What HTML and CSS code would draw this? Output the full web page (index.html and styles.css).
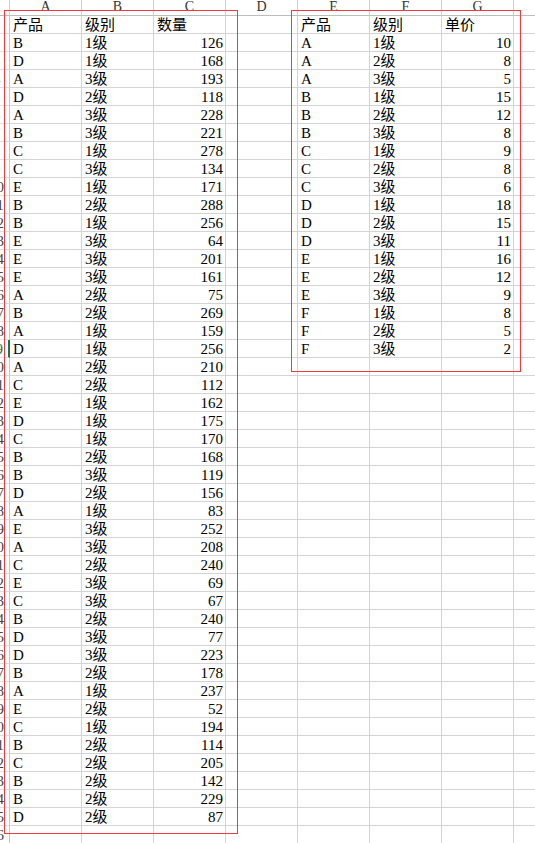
FILE: index.html
```html
<!DOCTYPE html>
<html lang="zh">
<head>
<meta charset="utf-8">
<title>Sheet</title>
<link rel="stylesheet" href="styles.css">
</head>
<body>
<div class="sheet">
  <div class="row hd"><span class="rh"></span><span class="c">A</span><span class="c">B</span><span class="c">C</span><span class="c">D</span><span class="c">E</span><span class="c">F</span><span class="c">G</span><span class="c"></span></div>
  <div class="row"><span class="rh"><i>1</i></span><span class="c">产品</span><span class="c">级别</span><span class="c">数量</span><span class="c"></span><span class="c">产品</span><span class="c">级别</span><span class="c">单价</span><span class="c"></span></div>
  <div class="row"><span class="rh"><i>2</i></span><span class="c">B</span><span class="c">1级</span><span class="c num">126</span><span class="c"></span><span class="c">A</span><span class="c">1级</span><span class="c num">10</span><span class="c"></span></div>
  <div class="row"><span class="rh"><i>3</i></span><span class="c">D</span><span class="c">1级</span><span class="c num">168</span><span class="c"></span><span class="c">A</span><span class="c">2级</span><span class="c num">8</span><span class="c"></span></div>
  <div class="row"><span class="rh"><i>4</i></span><span class="c">A</span><span class="c">3级</span><span class="c num">193</span><span class="c"></span><span class="c">A</span><span class="c">3级</span><span class="c num">5</span><span class="c"></span></div>
  <div class="row"><span class="rh"><i>5</i></span><span class="c">D</span><span class="c">2级</span><span class="c num">118</span><span class="c"></span><span class="c">B</span><span class="c">1级</span><span class="c num">15</span><span class="c"></span></div>
  <div class="row"><span class="rh"><i>6</i></span><span class="c">A</span><span class="c">3级</span><span class="c num">228</span><span class="c"></span><span class="c">B</span><span class="c">2级</span><span class="c num">12</span><span class="c"></span></div>
  <div class="row"><span class="rh"><i>7</i></span><span class="c">B</span><span class="c">3级</span><span class="c num">221</span><span class="c"></span><span class="c">B</span><span class="c">3级</span><span class="c num">8</span><span class="c"></span></div>
  <div class="row"><span class="rh"><i>8</i></span><span class="c">C</span><span class="c">1级</span><span class="c num">278</span><span class="c"></span><span class="c">C</span><span class="c">1级</span><span class="c num">9</span><span class="c"></span></div>
  <div class="row"><span class="rh"><i>9</i></span><span class="c">C</span><span class="c">3级</span><span class="c num">134</span><span class="c"></span><span class="c">C</span><span class="c">2级</span><span class="c num">8</span><span class="c"></span></div>
  <div class="row"><span class="rh"><i>10</i></span><span class="c">E</span><span class="c">1级</span><span class="c num">171</span><span class="c"></span><span class="c">C</span><span class="c">3级</span><span class="c num">6</span><span class="c"></span></div>
  <div class="row"><span class="rh"><i>11</i></span><span class="c">B</span><span class="c">2级</span><span class="c num">288</span><span class="c"></span><span class="c">D</span><span class="c">1级</span><span class="c num">18</span><span class="c"></span></div>
  <div class="row"><span class="rh"><i>12</i></span><span class="c">B</span><span class="c">1级</span><span class="c num">256</span><span class="c"></span><span class="c">D</span><span class="c">2级</span><span class="c num">15</span><span class="c"></span></div>
  <div class="row"><span class="rh"><i>13</i></span><span class="c">E</span><span class="c">3级</span><span class="c num">64</span><span class="c"></span><span class="c">D</span><span class="c">3级</span><span class="c num">11</span><span class="c"></span></div>
  <div class="row"><span class="rh"><i>14</i></span><span class="c">E</span><span class="c">3级</span><span class="c num">201</span><span class="c"></span><span class="c">E</span><span class="c">1级</span><span class="c num">16</span><span class="c"></span></div>
  <div class="row"><span class="rh"><i>15</i></span><span class="c">E</span><span class="c">3级</span><span class="c num">161</span><span class="c"></span><span class="c">E</span><span class="c">2级</span><span class="c num">12</span><span class="c"></span></div>
  <div class="row"><span class="rh"><i>16</i></span><span class="c">A</span><span class="c">2级</span><span class="c num">75</span><span class="c"></span><span class="c">E</span><span class="c">3级</span><span class="c num">9</span><span class="c"></span></div>
  <div class="row"><span class="rh"><i>17</i></span><span class="c">B</span><span class="c">2级</span><span class="c num">269</span><span class="c"></span><span class="c">F</span><span class="c">1级</span><span class="c num">8</span><span class="c"></span></div>
  <div class="row"><span class="rh"><i>18</i></span><span class="c">A</span><span class="c">1级</span><span class="c num">159</span><span class="c"></span><span class="c">F</span><span class="c">2级</span><span class="c num">5</span><span class="c"></span></div>
  <div class="row"><span class="rh sel"><i>19</i></span><span class="c">D</span><span class="c">1级</span><span class="c num">256</span><span class="c"></span><span class="c">F</span><span class="c">3级</span><span class="c num">2</span><span class="c"></span></div>
  <div class="row"><span class="rh"><i>20</i></span><span class="c">A</span><span class="c">2级</span><span class="c num">210</span><span class="c"></span><span class="c"></span><span class="c"></span><span class="c"></span><span class="c"></span></div>
  <div class="row"><span class="rh"><i>21</i></span><span class="c">C</span><span class="c">2级</span><span class="c num">112</span><span class="c"></span><span class="c"></span><span class="c"></span><span class="c"></span><span class="c"></span></div>
  <div class="row"><span class="rh"><i>22</i></span><span class="c">E</span><span class="c">1级</span><span class="c num">162</span><span class="c"></span><span class="c"></span><span class="c"></span><span class="c"></span><span class="c"></span></div>
  <div class="row"><span class="rh"><i>23</i></span><span class="c">D</span><span class="c">1级</span><span class="c num">175</span><span class="c"></span><span class="c"></span><span class="c"></span><span class="c"></span><span class="c"></span></div>
  <div class="row"><span class="rh"><i>24</i></span><span class="c">C</span><span class="c">1级</span><span class="c num">170</span><span class="c"></span><span class="c"></span><span class="c"></span><span class="c"></span><span class="c"></span></div>
  <div class="row"><span class="rh"><i>25</i></span><span class="c">B</span><span class="c">2级</span><span class="c num">168</span><span class="c"></span><span class="c"></span><span class="c"></span><span class="c"></span><span class="c"></span></div>
  <div class="row"><span class="rh"><i>26</i></span><span class="c">B</span><span class="c">3级</span><span class="c num">119</span><span class="c"></span><span class="c"></span><span class="c"></span><span class="c"></span><span class="c"></span></div>
  <div class="row"><span class="rh"><i>27</i></span><span class="c">D</span><span class="c">2级</span><span class="c num">156</span><span class="c"></span><span class="c"></span><span class="c"></span><span class="c"></span><span class="c"></span></div>
  <div class="row"><span class="rh"><i>28</i></span><span class="c">A</span><span class="c">1级</span><span class="c num">83</span><span class="c"></span><span class="c"></span><span class="c"></span><span class="c"></span><span class="c"></span></div>
  <div class="row"><span class="rh"><i>29</i></span><span class="c">E</span><span class="c">3级</span><span class="c num">252</span><span class="c"></span><span class="c"></span><span class="c"></span><span class="c"></span><span class="c"></span></div>
  <div class="row"><span class="rh"><i>30</i></span><span class="c">A</span><span class="c">3级</span><span class="c num">208</span><span class="c"></span><span class="c"></span><span class="c"></span><span class="c"></span><span class="c"></span></div>
  <div class="row"><span class="rh"><i>31</i></span><span class="c">C</span><span class="c">2级</span><span class="c num">240</span><span class="c"></span><span class="c"></span><span class="c"></span><span class="c"></span><span class="c"></span></div>
  <div class="row"><span class="rh"><i>32</i></span><span class="c">E</span><span class="c">3级</span><span class="c num">69</span><span class="c"></span><span class="c"></span><span class="c"></span><span class="c"></span><span class="c"></span></div>
  <div class="row"><span class="rh"><i>33</i></span><span class="c">C</span><span class="c">3级</span><span class="c num">67</span><span class="c"></span><span class="c"></span><span class="c"></span><span class="c"></span><span class="c"></span></div>
  <div class="row"><span class="rh"><i>34</i></span><span class="c">B</span><span class="c">2级</span><span class="c num">240</span><span class="c"></span><span class="c"></span><span class="c"></span><span class="c"></span><span class="c"></span></div>
  <div class="row"><span class="rh"><i>35</i></span><span class="c">D</span><span class="c">3级</span><span class="c num">77</span><span class="c"></span><span class="c"></span><span class="c"></span><span class="c"></span><span class="c"></span></div>
  <div class="row"><span class="rh"><i>36</i></span><span class="c">D</span><span class="c">3级</span><span class="c num">223</span><span class="c"></span><span class="c"></span><span class="c"></span><span class="c"></span><span class="c"></span></div>
  <div class="row"><span class="rh"><i>37</i></span><span class="c">B</span><span class="c">2级</span><span class="c num">178</span><span class="c"></span><span class="c"></span><span class="c"></span><span class="c"></span><span class="c"></span></div>
  <div class="row"><span class="rh"><i>38</i></span><span class="c">A</span><span class="c">1级</span><span class="c num">237</span><span class="c"></span><span class="c"></span><span class="c"></span><span class="c"></span><span class="c"></span></div>
  <div class="row"><span class="rh"><i>39</i></span><span class="c">E</span><span class="c">2级</span><span class="c num">52</span><span class="c"></span><span class="c"></span><span class="c"></span><span class="c"></span><span class="c"></span></div>
  <div class="row"><span class="rh"><i>40</i></span><span class="c">C</span><span class="c">1级</span><span class="c num">194</span><span class="c"></span><span class="c"></span><span class="c"></span><span class="c"></span><span class="c"></span></div>
  <div class="row"><span class="rh"><i>41</i></span><span class="c">B</span><span class="c">2级</span><span class="c num">114</span><span class="c"></span><span class="c"></span><span class="c"></span><span class="c"></span><span class="c"></span></div>
  <div class="row"><span class="rh"><i>42</i></span><span class="c">C</span><span class="c">2级</span><span class="c num">205</span><span class="c"></span><span class="c"></span><span class="c"></span><span class="c"></span><span class="c"></span></div>
  <div class="row"><span class="rh"><i>43</i></span><span class="c">B</span><span class="c">2级</span><span class="c num">142</span><span class="c"></span><span class="c"></span><span class="c"></span><span class="c"></span><span class="c"></span></div>
  <div class="row"><span class="rh"><i>44</i></span><span class="c">B</span><span class="c">2级</span><span class="c num">229</span><span class="c"></span><span class="c"></span><span class="c"></span><span class="c"></span><span class="c"></span></div>
  <div class="row"><span class="rh"><i>45</i></span><span class="c">D</span><span class="c">2级</span><span class="c num">87</span><span class="c"></span><span class="c"></span><span class="c"></span><span class="c"></span><span class="c"></span></div>
  <div class="row"><span class="rh"><i>46</i></span><span class="c"></span><span class="c"></span><span class="c"></span><span class="c"></span><span class="c"></span><span class="c"></span><span class="c"></span><span class="c"></span></div>
  <div class="mark mark-a"></div>
  <div class="mark mark-b"></div>
</div>
</body>
</html>
```

FILE: styles.css
```css
html, body {
  margin: 0;
  padding: 0;
  background: #fff;
  overflow: hidden;
}

.sheet {
  position: relative;
  width: 535px;
  height: 843px;
  overflow: hidden;
  font-family: "Liberation Serif", "Noto Sans CJK SC", serif;
  font-size: 15px;
  color: #000;
}

.row {
  display: grid;
  grid-template-columns: 10px repeat(7, 72px) 21px;
  height: 18px;
}

.row > span {
  box-sizing: border-box;
  height: 18px;
  border-right: 1px solid #d4d4d4;
  border-bottom: 1px solid #d4d4d4;
  line-height: 19px;
  padding: 0 2px 0 3px;
  white-space: nowrap;
}

.row > span:last-child {
  border-right: 0;
}

.row > .num {
  text-align: right;
  padding-right: 2px;
}

.row > .rh {
  display: flex;
  justify-content: flex-end;
  overflow: hidden;
  padding: 0;
  color: #444;
  border-right-color: #c6c6c6;
  border-bottom-color: #dedede;
}

.rh i {
  flex: none;
  width: 25px;
  text-align: center;
  font-style: normal;
}

.row > .sel {
  color: #217346;
  border-right: 2px solid #217346;
}

.row.hd {
  height: 16px;
}

.row.hd > span {
  height: 16px;
  line-height: 14px;
  font-size: 14px;
  text-align: center;
  color: #333;
  padding: 0;
  border-bottom-color: #bdbdbd;
  border-right-color: #d0d0d0;
}

.mark {
  position: absolute;
  box-sizing: border-box;
  border: 1px solid #ef3b3b;
}

.mark-a {
  left: 4px;
  top: 10px;
  width: 234px;
  height: 824px;
}

.mark-b {
  left: 291px;
  top: 10px;
  width: 230px;
  height: 362px;
}
```
